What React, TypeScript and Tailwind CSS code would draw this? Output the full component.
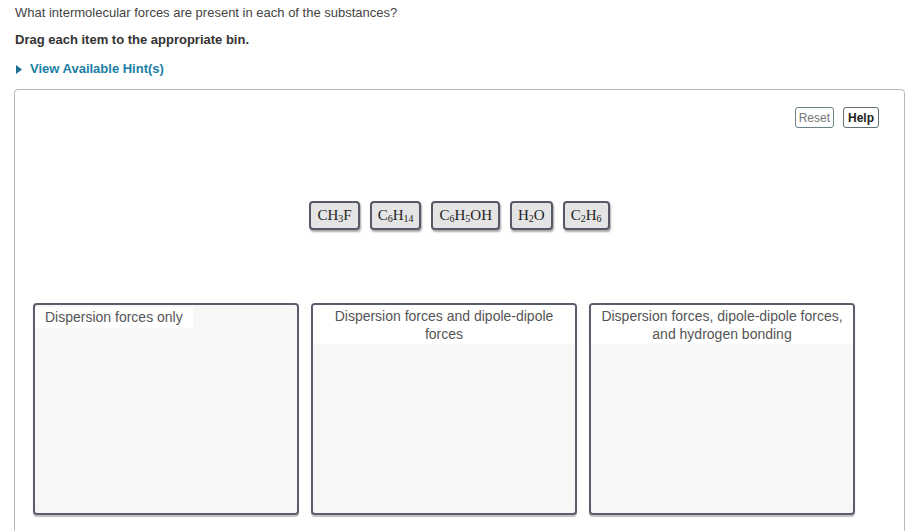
import React from "react";

const chips: { id: string; parts: string[] }[] = [
  { id: "ch3f", parts: ["CH", "3", "F"] },
  { id: "c6h14", parts: ["C", "6", "H", "14"] },
  { id: "c6h5oh", parts: ["C", "6", "H", "5", "OH"] },
  { id: "h2o", parts: ["H", "2", "O"] },
  { id: "c2h6", parts: ["C", "2", "H", "6"] },
];

function Formula({ parts }: { parts: string[] }) {
  return (
    <span className="leading-none">
      {parts.map((p, i) =>
        i % 2 === 1 ? (
          <span key={i} className="relative top-[2px] text-[10px]">{p}</span>
        ) : (
          <span key={i}>{p}</span>
        )
      )}
    </span>
  );
}

function Bin({ label, align }: { label: React.ReactNode; align: "left" | "center" }) {
  return (
    <div className="w-[266px] h-[212px] rounded-[4px] border-2 border-[#5a5d6b] bg-[#f7f7f7] shadow-[0_2px_1px_rgba(0,0,0,0.25)] overflow-hidden">
      {align === "left" ? (
        <div className="inline-block bg-white pl-[10px] pr-[10px] pt-[1px] h-[21px] text-[14px] text-[#555] leading-[19px]">
          {label}
        </div>
      ) : (
        <div className="bg-white pt-[2px] h-[39px] text-center text-[14px] text-[#555] leading-[18px] px-2">
          {label}
        </div>
      )}
    </div>
  );
}

export default function App() {
  return (
    <div className="w-[914px] h-[531px] overflow-hidden bg-white text-[#333]" style={{ fontFamily: "Arial, 'Liberation Sans', sans-serif" }}>
      <div className="pl-[15px] pt-[5px]">
        <p className="text-[13px] leading-[16px] text-[#444]">What intermolecular forces are present in each of the substances?</p>
        <p className="text-[13px] leading-[16px] font-bold text-[#333] mt-[11px]">Drag each item to the appropriate bin.</p>
        <div className="mt-[13px] flex items-center gap-[8px] text-[13px] leading-[16px] font-bold text-[#1a7fa6]">
          <svg width="6" height="9" viewBox="0 0 6 9" className="ml-[1px]">
            <path d="M0 0 L6 4.5 L0 9 Z" fill="#1a6f93" />
          </svg>
          <span>View Available Hint(s)</span>
        </div>
      </div>
      <div className="ml-[14px] mt-[12px] w-[891px] h-[460px] border border-[#b8b8b8] rounded-[4px]">
        <div className="flex justify-end gap-[9px] pr-[25px] pt-[17px]">
          <button className="h-[21px] px-[3px] border border-[#6d7f86] rounded-[3px] text-[12px] text-[#777] leading-[18px]">Reset</button>
          <button className="h-[21px] px-[4px] border border-[#5f6f75] rounded-[3px] text-[12px] font-bold text-[#222] leading-[18px]">Help</button>
        </div>
        <div className="flex justify-center gap-[10px] mt-[73px]" style={{ fontFamily: "'Liberation Serif', 'DejaVu Serif', serif" }}>
          {chips.map((c) => (
            <div key={c.id} className="h-[29px] px-[6px] flex items-center rounded-[4px] border-2 border-[#555966] bg-[#e4e4e4] shadow-[1px_2px_2px_rgba(0,0,0,0.35)] text-[15px] text-[#222]">
              <Formula parts={c.parts} />
            </div>
          ))}
        </div>
        <div className="flex gap-[12px] pl-[18px] mt-[73px]">
          <Bin label="Dispersion forces only" align="left" />
          <Bin label="Dispersion forces and dipole-dipole forces" align="center" />
          <Bin label="Dispersion forces, dipole-dipole forces, and hydrogen bonding" align="center" />
        </div>
      </div>
    </div>
  );
}
